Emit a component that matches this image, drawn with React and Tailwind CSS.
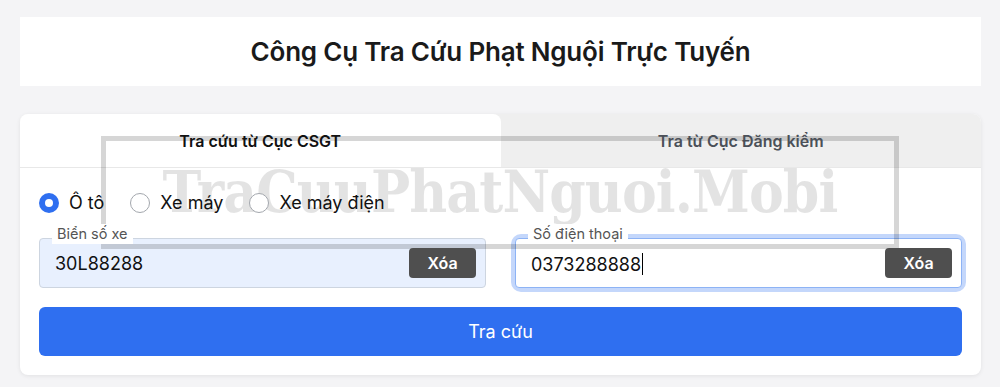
import React from "react";

function Radio({ checked, label }) {
  return (
    <label className="relative z-20 flex items-center gap-[10px]">
      {checked ? (
        <span className="flex h-[20px] w-[20px] items-center justify-center rounded-full bg-[#2f6ff0]">
          <span className="h-[8px] w-[8px] rounded-full bg-white" />
        </span>
      ) : (
        <span className="h-[20px] w-[20px] rounded-full border border-[#a3a7ad] bg-white" />
      )}
      <span className="text-[18px] text-[#111]">{label}</span>
    </label>
  );
}

function Field({ label, value, focused }) {
  return (
    <div
      className={
        focused
          ? "relative flex-1 rounded-[6px] ring-[4px] ring-[#c4d7fb]"
          : "relative flex-1"
      }
    >
      <span className="absolute left-[13px] top-[-14px] z-20 bg-white px-[5px] text-[14.5px] leading-[20px] text-[#555]">
        {label}
      </span>
      <div
        className={
          focused
            ? "flex h-[50px] items-center rounded-[4px] border border-[#8db3f5] bg-white pl-[15px] pr-[9px]"
            : "flex h-[50px] items-center rounded-[4px] border border-[#cdd5e0] bg-[#e8f0fe] pl-[15px] pr-[9px]"
        }
      >
        <span className="flex-1 text-[18px] text-[#111]">
          {value}
          {focused && <span className="ml-[1px] inline-block h-[22px] w-[1px] translate-y-[4px] bg-black" />}
        </span>
        <button className="relative z-20 h-[30px] w-[67px] rounded-[4px] bg-[#4f4f4f] text-[16px] font-semibold text-white">
          Xóa
        </button>
      </div>
    </div>
  );
}

export default function App() {
  return (
    <div className="min-h-[387px] bg-[#f4f4f6] pb-[13px] pl-[20px] pr-[19px] pt-[17px] font-['Inter','Noto_Sans',sans-serif]">
      <div className="flex h-[69px] items-center justify-center bg-white">
        <h1 className="text-[26px] font-semibold tracking-[-0.2px] text-[#1a1a1a]">
          Công Cụ Tra Cứu Phạt Nguội Trực Tuyến
        </h1>
      </div>

      <div className="relative mt-[28px] rounded-[8px] bg-white shadow-[0_1px_4px_rgba(0,0,0,0.08)]">
        {/* watermark */}
        <div className="pointer-events-none absolute left-[81px] top-[22px] z-10 flex h-[113px] w-[798px] items-center justify-center border-[5px] border-[rgba(0,0,0,0.16)]">
          <span className="inline-block scale-x-[0.9] font-['DejaVu_Serif',serif] text-[58px] font-bold tracking-[-1px] text-[rgba(0,0,0,0.11)]">
            TraCuuPhatNguoi.Mobi
          </span>
        </div>

        <div className="flex h-[54px] rounded-t-[8px] border-b border-[#e8e8e8] bg-[#efefef]">
          <div className="relative flex flex-1 items-center justify-center rounded-t-[8px] bg-white">
            <span className="relative z-20 text-[16px] font-semibold text-[#111]">Tra cứu từ Cục CSGT</span>
          </div>
          <div className="flex flex-1 items-center justify-center">
            <span className="relative z-20 text-[16px] font-semibold text-[#4b5058]">Tra từ Cục Đăng kiểm</span>
          </div>
        </div>

        <div className="px-[19px] pb-[19px] pt-[21px]">
          <div className="flex items-center gap-[26px]">
            <Radio checked label="Ô tô" />
            <Radio label="Xe máy" />
            <Radio label="Xe máy điện" />
          </div>

          <div className="mt-[22px] flex gap-[29px]">
            <Field label="Biển số xe" value="30L88288" />
            <Field label="Số điện thoại" value="0373288888" focused />
          </div>

          <button className="mt-[19px] flex h-[49px] w-full items-center justify-center rounded-[6px] bg-[#2f6ff0] text-[18px] text-white">
            Tra cứu
          </button>
        </div>
      </div>
    </div>
  );
}
